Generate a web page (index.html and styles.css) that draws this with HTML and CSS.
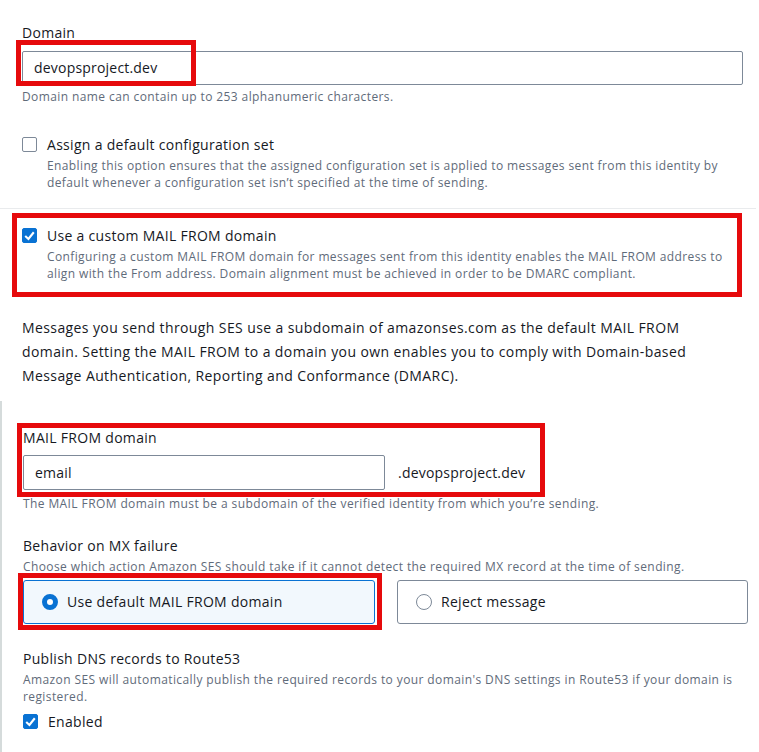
FILE: index.html
```html
<!DOCTYPE html>
<html lang="en">
<head>
<meta charset="utf-8">
<title>Domain settings</title>
<link rel="stylesheet" href="styles.css">
</head>
<body>
<div class="page">
  <div class="block">
    <div class="field">
      <div class="label">Domain</div>
      <div class="input-wrap">
        <div class="input full">devopsproject.dev</div>
        <span class="mark mark-domain"></span>
      </div>
      <div class="hint">Domain name can contain up to 253 alphanumeric characters.</div>
    </div>

    <div class="check-row first-check">
      <span class="box"></span>
      <div class="check-text">
        <div class="check-label">Assign a default configuration set</div>
        <div class="check-desc">Enabling this option ensures that the assigned configuration set is applied to messages sent from this identity by default whenever a configuration set isn’t specified at the time of sending.</div>
      </div>
    </div>
  </div>

  <div class="divider"></div>

  <div class="block block-second">
    <div class="check-row second-check">
      <span class="box checked"><svg viewBox="0 0 14 14" width="15" height="15"><path d="M3 7.5 L6 10.2 L11 4" fill="none" stroke="#fff" stroke-width="2"/></svg></span>
      <div class="check-text">
        <div class="check-label">Use a custom MAIL FROM domain</div>
        <div class="check-desc">Configuring a custom MAIL FROM domain for messages sent from this identity enables the MAIL FROM address to align with the From address. Domain alignment must be achieved in order to be DMARC compliant.</div>
      </div>
      <span class="mark mark-custom"></span>
    </div>

    <p class="intro">Messages you send through SES use a subdomain of amazonses.com as the default MAIL FROM domain. Setting the MAIL FROM to a domain you own enables you to comply with Domain-based Message Authentication, Reporting and Conformance (DMARC).</p>
  </div>

  <div class="nested">
    <div class="field mail-from">
      <div class="label">MAIL FROM domain</div>
      <div class="suffix-row">
        <div class="input short">email</div>
        <span class="suffix">.devopsproject.dev</span>
      </div>
      <span class="mark mark-mailfrom"></span>
      <div class="hint under">The MAIL FROM domain must be a subdomain of the verified identity from which you’re sending.</div>
    </div>

    <div class="field behavior">
      <div class="label">Behavior on MX failure</div>
      <div class="hint tight">Choose which action Amazon SES should take if it cannot detect the required MX record at the time of sending.</div>
      <div class="tiles">
        <div class="tile selected">
          <span class="radio on"></span>
          <span>Use default MAIL FROM domain</span>
          <span class="mark mark-tile"></span>
        </div>
        <div class="tile">
          <span class="radio"></span>
          <span>Reject message</span>
        </div>
      </div>
    </div>

    <div class="field publish">
      <div class="label">Publish DNS records to Route53</div>
      <div class="hint desc">Amazon SES will automatically publish the required records to your domain's DNS settings in Route53 if your domain is registered.</div>
      <div class="enabled-row">
        <span class="box checked"><svg viewBox="0 0 14 14" width="15" height="15"><path d="M3 7.5 L6 10.2 L11 4" fill="none" stroke="#fff" stroke-width="2"/></svg></span>
        <span class="check-label">Enabled</span>
      </div>
    </div>
  </div>
</div>
</body>
</html>
```

FILE: styles.css
```css
* { box-sizing: border-box; }
html, body { margin: 0; padding: 0; background: #ffffff; }
body {
  font-family: "Open Sans", "Noto Sans", sans-serif;
  color: #16191f;
  font-size: 14px;
  line-height: 20px;
  letter-spacing: 0.3px;
  width: 759px;
  height: 752px;
  overflow: hidden;
}
.page { width: 756px; }
.block { padding: 23px 13px 0 22px; }
.block-second { padding-top: 17px; }
.field { position: relative; }
.label { font-size: 14px; line-height: 20px; color: #16191f; }
.input-wrap { position: relative; margin-top: 8px; }
.input {
  height: 34px;
  border: 1px solid #7d8998;
  border-radius: 2px;
  padding: 0 11px;
  font-size: 14px;
  line-height: 32px;
  color: #16191f;
  background: #fff;
  letter-spacing: 0.2px;
}
.hint { font-size: 12px; line-height: 16px; color: #5f6b7a; margin-top: 4px; letter-spacing: 0.4px; }
.mark { position: absolute; border: 5px solid #e60a0c; pointer-events: none; }
.mark-domain { left: -6px; top: -11px; width: 180px; height: 46px; }

.check-row { position: relative; display: flex; gap: 10px; align-items: flex-start; }
.first-check { margin-top: 30px; padding-bottom: 17px; }
.box {
  flex: none;
  width: 15px; height: 15px;
  border: 1px solid #7d8998;
  border-radius: 2px;
  margin-top: 2px;
  display: flex;
}
.box.checked { background: #0972d3; border-color: #0972d3; }
.box.checked svg { margin: -1px; }
.check-label { font-size: 14px; line-height: 20px; color: #16191f; }
.check-desc { font-size: 12px; line-height: 17px; color: #5f6b7a; margin-top: 2px; letter-spacing: 0.38px; }

.divider { height: 1px; background: #e9ebed; }

.mark-custom { left: -10px; top: -13px; width: 730px; height: 84px; }

.intro { margin: 34px 0 0; font-size: 14px; line-height: 24px; color: #16191f; padding-right: 10px; letter-spacing: 0.4px; }

.nested {
  margin-top: 13px;
  border-left: 2px solid #d5dbdb;
  padding: 27px 12px 0 21px;
  height: 352px;
}
.suffix-row { display: flex; align-items: center; gap: 13px; margin-top: 7px; }
.input.short { width: 362px; height: 35px; line-height: 33px; }
.suffix { font-size: 14px; letter-spacing: 0.2px; }
.mark-mailfrom { left: -6px; top: -5px; width: 528px; height: 74px; }
.hint.under { margin-top: 6px; }

.behavior { margin-top: 24px; }
.hint.tight { margin-top: 3px; }
.tiles { display: flex; gap: 22px; margin-top: 5px; }
.tile {
  position: relative;
  flex: none;
  width: 351px;
  height: 44px;
  border: 1px solid #7d8998;
  border-radius: 3px;
  display: flex;
  align-items: center;
  gap: 9px;
  padding-left: 18px;
  font-size: 14px;
}
.tile.selected { width: 352px; border-color: #0972d3; background: #f2f8fd; }
.radio {
  flex: none;
  width: 16px; height: 16px;
  border-radius: 50%;
  border: 1px solid #7d8998;
  background: #fff;
}
.radio.on { border: 5px solid #0972d3; }
.mark-tile { left: -6px; top: -8px; width: 364px; height: 57px; }

.publish { margin-top: 25px; }
.hint.desc { line-height: 17px; margin-top: 2px; }
.enabled-row { display: flex; gap: 10px; align-items: flex-start; margin-top: 7px; }
```
